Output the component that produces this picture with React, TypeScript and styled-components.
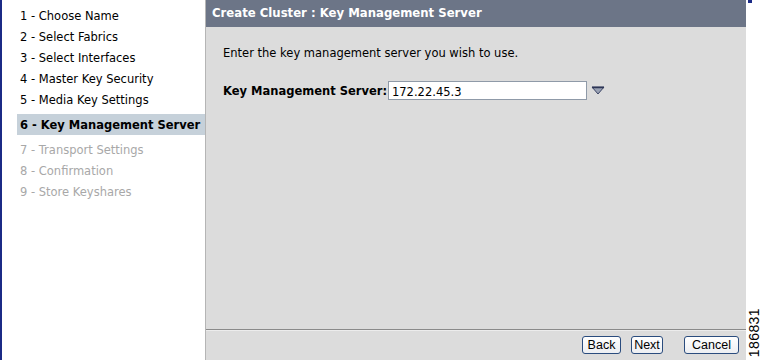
import React from "react";
import styled, { createGlobalStyle } from "styled-components";

const GlobalStyle = createGlobalStyle`
  html, body {
    margin: 0;
    padding: 0;
    background: #ffffff;
  }
  body {
    font-family: "DejaVu Sans", Verdana, sans-serif;
  }
`;

const Page = styled.div`
  display: flex;
  width: 762px;
  height: 360px;
  overflow: hidden;
`;

const Sidebar = styled.ul`
  width: 203px;
  margin: 0;
  padding: 5px 0 0 0;
  list-style: none;
  border-left: 2px solid #1b2a86;
  background: #ffffff;
`;

const Step = styled.li<{ $active?: boolean; $disabled?: boolean }>`
  height: 21px;
  line-height: 22px;
  margin: ${(p) => (p.$active ? "4px 0" : "0")};
  padding-left: ${(p) => (p.$active ? "3px" : "18px")};
  margin-left: ${(p) => (p.$active ? "15px" : "0")};
  font-size: 11.5px;
  font-weight: ${(p) => (p.$active ? "bold" : "normal")};
  color: ${(p) => (p.$disabled ? "#a8a8a8" : "#000000")};
  background: ${(p) => (p.$active ? "#c6d1da" : "transparent")};
  white-space: nowrap;
`;

const Main = styled.div`
  width: 540px;
  display: flex;
  flex-direction: column;
  background: #dcdcdc;
  border-left: 1px solid #b5b5b5;
`;

const Header = styled.div`
  height: 27px;
  line-height: 27px;
  padding-left: 6px;
  background: #6c7587;
  color: #ffffff;
  font-size: 11.7px;
  font-weight: bold;
`;

const Content = styled.div`
  flex: 1;
  padding: 19px 0 0 17px;
  font-size: 11.5px;
  color: #000000;
`;

const Intro = styled.p`
  margin: 0 0 21px 0;
`;

const FieldRow = styled.div`
  display: flex;
  align-items: center;
  gap: 1px;
`;

const Label = styled.label`
  font-weight: bold;
  font-size: 11.5px;
`;

const TextInput = styled.input`
  box-sizing: border-box;
  width: 199px;
  height: 19px;
  padding: 2px 3px 0;
  border: 1px solid #8f9aa8;
  background: #ffffff;
  font-family: "DejaVu Sans", Verdana, sans-serif;
  font-size: 11.5px;
  color: #000000;
  outline: none;
`;

const DropArrow = styled.svg`
  margin-left: 3px;
`;

const Footer = styled.div`
  height: 30px;
  border-top: 1px solid #8a8a8a;
  box-shadow: inset 0 1px 0 #ececec;
  display: flex;
  align-items: center;
  justify-content: flex-end;
  padding-right: 7px;
  gap: 10px;
`;

const Button = styled.button<{ $width: number; $spaced?: boolean }>`
  box-sizing: border-box;
  width: ${(p) => p.$width}px;
  height: 18px;
  padding: 0;
  margin-left: ${(p) => (p.$spaced ? "11px" : "0")};
  border: 1px solid #2a4c7e;
  border-radius: 3px;
  background: linear-gradient(#ffffff, #eceef2);
  font-family: "Liberation Sans", Arial, sans-serif;
  font-size: 12.5px;
  line-height: 16px;
  color: #000000;
`;

const RightStrip = styled.div`
  position: relative;
  flex: 1;
  display: flex;
  flex-direction: column;
  justify-content: flex-end;
  align-items: center;
  padding-bottom: 3px;
`;

const CornerMark = styled.div`
  position: absolute;
  top: 0;
  left: 2px;
  width: 4px;
  height: 3px;
  background: #1b2a86;
`;

const FigureNumber = styled.span`
  writing-mode: vertical-rl;
  transform: rotate(180deg);
  font-family: "Liberation Sans", Arial, sans-serif;
  font-size: 14px;
  letter-spacing: 0.4px;
  color: #000000;
`;

const steps = [
  { label: "1 - Choose Name" },
  { label: "2 - Select Fabrics" },
  { label: "3 - Select Interfaces" },
  { label: "4 - Master Key Security" },
  { label: "5 - Media Key Settings" },
  { label: "6 - Key Management Server", active: true },
  { label: "7 - Transport Settings", disabled: true },
  { label: "8 - Confirmation", disabled: true },
  { label: "9 - Store Keyshares", disabled: true },
];

const App: React.FC = () => {
  return (
    <>
      <GlobalStyle />
      <Page>
        <Sidebar>
          {steps.map((s) => (
            <Step key={s.label} $active={s.active} $disabled={s.disabled}>
              {s.label}
            </Step>
          ))}
        </Sidebar>
        <Main>
          <Header>Create Cluster : Key Management Server</Header>
          <Content>
            <Intro>Enter the key management server you wish to use.</Intro>
            <FieldRow>
              <Label>Key Management Server:</Label>
              <TextInput defaultValue="172.22.45.3" />
              <DropArrow width="14" height="9" viewBox="0 0 14 9">
                <polygon points="1,1 13,1 7,8" fill="#9aa2b4" stroke="#3c4566" strokeWidth="1" />
                <line x1="1" y1="1.5" x2="13" y2="1.5" stroke="#2d3656" strokeWidth="1.5" />
              </DropArrow>
            </FieldRow>
          </Content>
          <Footer>
            <Button $width={39}>Back</Button>
            <Button $width={32}>Next</Button>
            <Button $width={55} $spaced>Cancel</Button>
          </Footer>
        </Main>
        <RightStrip>
          <CornerMark />
          <FigureNumber>186831</FigureNumber>
        </RightStrip>
      </Page>
    </>
  );
};

export default App;
